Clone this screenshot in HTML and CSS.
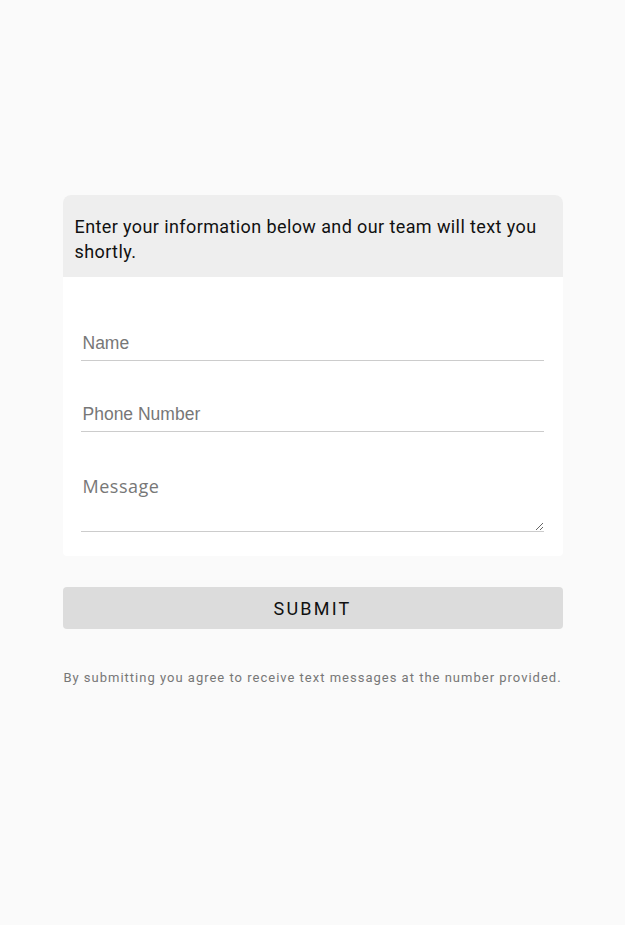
FILE: index.html
```html
<!DOCTYPE html>
<html>
<head>
<meta charset="utf-8">
<link rel="stylesheet" href="styles.css">
</head>
<body>
<main class="wrap">
  <form class="card">
    <div class="card-head">Enter your information below and our team will text you shortly.</div>
    <div class="card-body">
      <input class="field" type="text" placeholder="Name">
      <input class="field" type="tel" placeholder="Phone Number">
      <textarea class="field area" placeholder="Message"></textarea>
    </div>
  </form>
  <button class="submit" type="button">SUBMIT</button>
  <p class="note">By submitting you agree to receive text messages at the number provided.</p>
</main>
</body>
</html>
```
FILE: styles.css
```css
html, body {
  margin: 0;
  padding: 0;
  background: #fafafa;
}
.wrap {
  width: 500px;
  margin: 0 auto;
  padding-top: 195px;
}
.card {
  margin: 0;
  background: #fff;
  border-radius: 8px 8px 4px 4px;
  overflow: hidden;
}
.card-head {
  background: #eeeeee;
  padding: 19px 12px 13px 12px;
  font-family: Roboto, sans-serif;
  font-size: 18px;
  line-height: 25px;
  color: #111;
  letter-spacing: 0.4px;
}
.card-body {
  display: flex;
  flex-direction: column;
  gap: 35px;
  padding: 48px 19px 24px 18px;
}
.field {
  display: block;
  box-sizing: border-box;
  width: 100%;
  height: 36px;
  border: none;
  border-bottom: 1px solid #cccccc;
  outline: none;
  padding: 2px 2px 0;
  margin: 0;
  background: transparent;
  font-family: "Liberation Sans", Arial, sans-serif;
  font-size: 17.5px;
  color: #333;
}
.field::placeholder {
  color: #777;
}
.area {
  height: 65px;
  padding-top: 8px;
  resize: vertical;
  font-family: "Open Sans", sans-serif;
  font-size: 18px;
  letter-spacing: 0.5px;
  line-height: 22px;
}
.submit {
  display: block;
  width: 100%;
  height: 42px;
  margin-top: 31px;
  border: none;
  border-radius: 4px;
  background: #dcdcdc;
  font-family: Roboto, sans-serif;
  font-size: 18px;
  letter-spacing: 2.2px;
  color: #111;
  padding: 0;
}
.note {
  margin: 41px 0 0;
  text-align: center;
  font-family: Roboto, sans-serif;
  font-size: 13px;
  line-height: 16px;
  letter-spacing: 1px;
  color: #777;
  white-space: nowrap;
}
```
